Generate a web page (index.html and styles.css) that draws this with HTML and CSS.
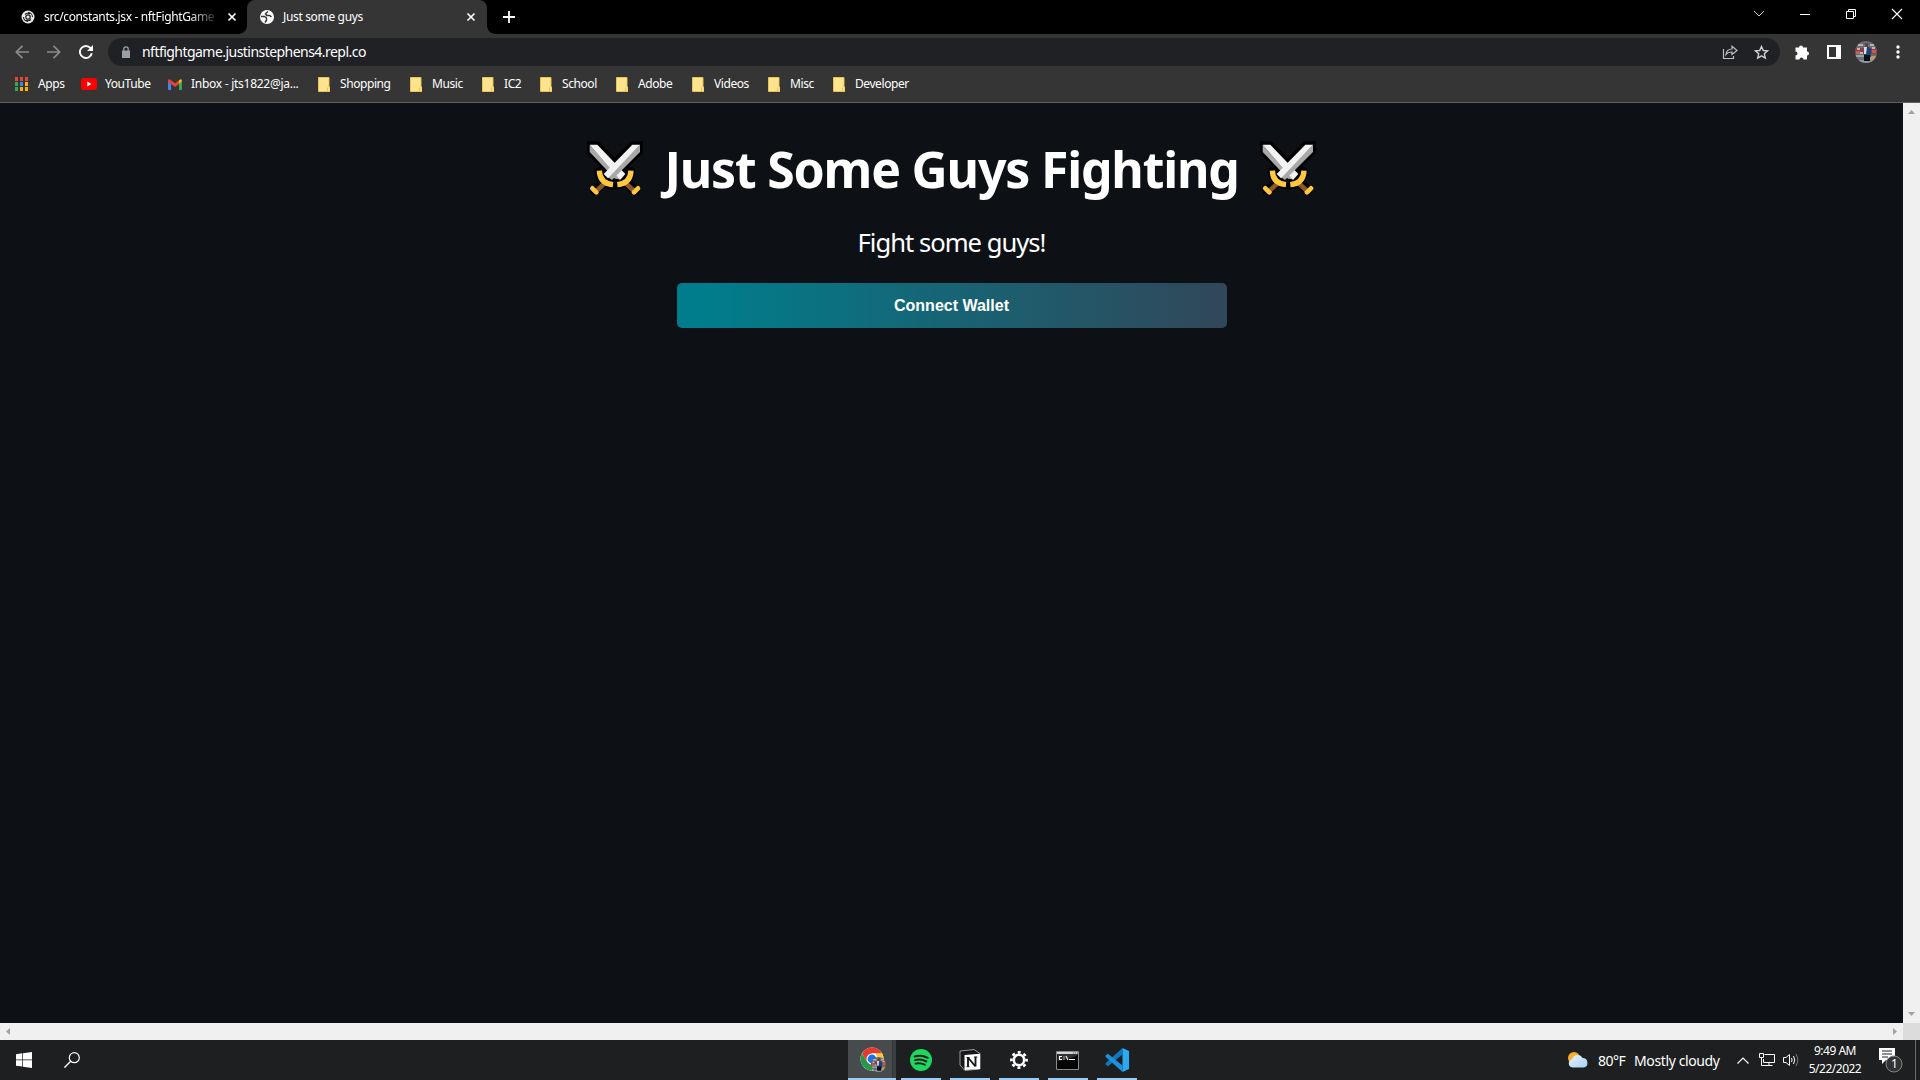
FILE: index.html
```html
<!DOCTYPE html>
<html lang="en">
<head>
<meta charset="utf-8">
<title>Just some guys</title>
<link rel="stylesheet" href="styles.css">
</head>
<body>
<svg class="defs" width="0" height="0">
  <defs>
    <symbol id="folder" viewBox="0 0 12 15">
      <path d="M.5.5h10.5v9.500h1v4.500H.5z" fill="#ffe48f" stroke="#e8c252"/>
      <path d="M9.500 10.500v3.500" stroke="#e8c252"/>
    </symbol>
    <symbol id="close" viewBox="0 0 10 10">
      <path d="M1.500 1.500l7 7M8.500 1.500l-7 7" stroke="#fff" stroke-width="1.700"/>
    </symbol>
    <symbol id="swords" viewBox="20 33 168 168">
      <g stroke="#000" stroke-width="22" stroke-linejoin="miter" fill="#000">
        <path d="M30 45h20l75 75-18 20L30 64zM177 45h-20L72 128l22 18 83-82z"/>
        <path d="M57 124q2 34 40 40M150 124q-2 34-38 40M70 160l-28 22M137 160l28 22" fill="none" stroke-width="28" stroke-linecap="round"/>
      </g>
      <path d="M28 44l90 104-14-2-76-80z" fill="#a9a9a9"/>
      <path d="M28 44h23l84 88-16 18z" fill="#f2f2f2"/>
      <path d="M179 44v22l-84 84-13-9z" fill="#a9a9a9"/>
      <path d="M179 44h-23l-86 88 13 13z" fill="#f2f2f2"/>
      <path d="M76 157l-27 25M133 157l27 25" stroke="#8e562e" stroke-width="14"/>
      <path d="M57 122q1 38 41 42M152 122q-1 38-41 42" fill="none" stroke="#ffc83d" stroke-width="16"/>
      <path d="M36 175l12 12M173 175l-12 12" stroke="#ffc83d" stroke-width="14" stroke-linecap="round"/>
    </symbol>
    <symbol id="avatar" viewBox="0 0 22 22">
      <clipPath id="disc"><circle cx="11" cy="11" r="11"/></clipPath>
      <g clip-path="url(#disc)">
        <path d="M0 0h22v22H0z" fill="#6b6c74"/>
        <path d="M3 3h5v2H3zM15 3h4v2h-4z" fill="#b9aeb4"/>
        <path d="M0 7h22v6H0z" fill="#83424a"/>
        <path d="M2 7h3v2H2zM17 6h3v2h-3zM5 11h3v2H5z" fill="#c3b2b6"/>
        <path d="M1 10h4v3H1zM17 9h4v3h-4z" fill="#c95c50"/>
        <path d="M1 14h8v2H1z" fill="#8fa7a4"/>
        <path d="M15 15h7v4h-7z" fill="#b39b68"/>
        <path d="M0 19h22v3H0z" fill="#8d969e"/>
        <path d="M9 6h5l2 2v8H9z" fill="#174579"/>
        <path d="M9 6h3l-1 7H9z" fill="#d9dce6"/>
        <path d="M10 2h3v4h-3z" fill="#63413b"/>
        <path d="M9 14h6v6H9z" fill="#0b1016"/>
      </g>
    </symbol>
  </defs>
</svg>

<header class="browser">
  <div class="tabstrip">
    <div class="tab tab-back">
      <svg class="favicon" width="14" height="14" viewBox="0 0 14 14"><circle cx="7" cy="7" r="6.500" fill="#e8eaed"/><path d="M7 2.500a4.500 4.500 0 0 1 4.500 4.500M7 11.500A4.500 4.500 0 0 1 2.500 7M4 4.500a4 4 0 0 1 5-.500M10 9.500a4 4 0 0 1-5 .500" fill="none" stroke="#222" stroke-width="1.100"/><circle cx="7" cy="7" r="2.200" fill="none" stroke="#222" stroke-width="1.300"/></svg>
      <span class="tab-title fade">src/constants.jsx - nftFightGame -</span>
      <svg class="x" width="10" height="10"><use href="#close"/></svg>
    </div>
    <div class="tab tab-active">
      <svg class="favicon" width="14" height="14" viewBox="0 0 14 14"><circle cx="7" cy="7" r="7" fill="#fff"/><path d="M8 1.500L5.500 3.800l1.200 1.700h3L11.500 7M1 6.500h3.500L6.500 8v2.200L5 12.500" fill="none" stroke="#35363a" stroke-width="1.500"/></svg>
      <span class="tab-title">Just some guys</span>
      <svg class="x" width="10" height="10"><use href="#close"/></svg>
    </div>
    <svg class="newtab" width="12" height="12" viewBox="0 0 12 12"><path d="M6 0v12M0 6h12" stroke="#fff" stroke-width="1.800"/></svg>
    <div class="caption">
      <svg width="12" height="12" viewBox="0 0 12 12"><path d="M1 3l5 5 5-5" fill="none" stroke="#ccc"/></svg>
      <svg width="12" height="12" viewBox="0 0 12 12"><path d="M1 6.500h10" stroke="#fff"/></svg>
      <svg width="12" height="12" viewBox="0 0 12 12"><path d="M1.500 3.500h7v7h-7zM3.500 3.500v-2h7v7h-2" fill="none" stroke="#fff"/></svg>
      <svg width="12" height="12" viewBox="0 0 12 12"><path d="M1 1l10 10M11 1L1 11" stroke="#fff" stroke-width="1.100"/></svg>
    </div>
  </div>

  <div class="toolbar">
    <svg width="14" height="14" viewBox="0 0 14 14"><path d="M14 7H1.500M7.500.8L1.300 7l6.200 6.200" fill="none" stroke="#8b8b8b" stroke-width="1.700"/></svg>
    <svg width="14" height="14" viewBox="0 0 14 14"><path d="M0 7h12.500M6.500.8L12.700 7l-6.200 6.200" fill="none" stroke="#8b8b8b" stroke-width="1.700"/></svg>
    <svg width="14" height="14" viewBox="0 0 14 14"><path d="M12.800 8.200A6 6 0 1 1 11.600 3.200" fill="none" stroke="#fff" stroke-width="1.900"/><path d="M14 0v6H8z" fill="#fff"/></svg>
    <div class="omnibox">
      <svg width="8" height="12" viewBox="0 0 8 12"><path d="M0 4.500h8V12H0z" fill="#9aa0a6"/><path d="M1.800 5V3a2.200 2.200 0 0 1 4.400 0v2" fill="none" stroke="#9aa0a6" stroke-width="1.300"/></svg>
      <span class="url">nftfightgame.justinstephens4.repl.co</span>
      <svg class="share" width="16" height="15" viewBox="0 0 16 15"><path d="M1.500 4v9.500h10V11" fill="none" stroke="#bdbdbd" stroke-width="1.200"/><path d="M4 9.500c.5-4 3-5.500 6-5.500V1.200l5 4.300-5 4V7C7.500 7 5.500 7.500 4 9.500z" fill="none" stroke="#bdbdbd" stroke-width="1.200"/></svg>
      <svg class="star" width="15" height="15" viewBox="0 0 15 15"><path d="M7.500 1.500l1.800 4 4.300.4-3.300 2.900 1 4.300-3.800-2.300-3.800 2.300 1-4.300L1.400 5.900l4.300-.4z" fill="none" stroke="#d0d0d0" stroke-width="1.400"/></svg>
    </div>
    <div class="actions">
      <svg width="16" height="16" viewBox="0 0 16 16"><path d="M1.500 3.500H5a2 2 0 1 1 4 0h4v4a2 2 0 1 1 0 4v4H9.500a2 2 0 1 0-4 0h-4V11.500a2 2 0 1 0 0-4z" fill="#fff"/></svg>
      <svg width="14" height="14" viewBox="0 0 14 14"><path d="M1 1h12v12H1z" fill="none" stroke="#fff" stroke-width="2"/><path d="M9 0h5v14H9z" fill="#fff"/></svg>
      <svg width="22" height="22"><use href="#avatar"/></svg>
      <svg width="4" height="14" viewBox="0 0 4 14"><circle cx="2" cy="2" r="1.700" fill="#fff"/><circle cx="2" cy="7" r="1.700" fill="#fff"/><circle cx="2" cy="12" r="1.700" fill="#fff"/></svg>
    </div>
  </div>

  <nav class="bookmarks">
    <a class="bm bm-apps"><svg width="13" height="14" viewBox="0 0 13 14"><path d="M0 0h3v4H0zM5 0h3v4H5zM10 0h3v4h-3z" fill="#ea4335"/><path d="M0 5h3v4H0zM0 10h3v4H0z" fill="#34a853"/><path d="M5 5h3v4H5z" fill="#2a8cf4"/><path d="M10 5h3v4h-3zM5 10h3v4H5zM10 10h3v4h-3z" fill="#fbaf08"/></svg><span>Apps</span></a>
    <a class="bm bm-youtube"><svg width="16" height="12" viewBox="0 0 16 12"><rect width="16" height="12" rx="3" fill="#f00"/><path d="M6.300 3.500v5l4.200-2.500z" fill="#fff"/></svg><span>YouTube</span></a>
    <a class="bm bm-inbox"><svg width="14" height="11" viewBox="0 0 14 11"><path d="M0 2v8.200c0 .5.300.8.800.8H3V4z" fill="#4285f4"/><path d="M14 2v8.200c0 .5-.3.800-.8.800H11V4z" fill="#34a853"/><path d="M11 1.500L12 .5q2-1 2 1.500L11 5z" fill="#fbbc04"/><path d="M0 2q0-2.500 2-1.500L7 4.300l4-3v3.700L7 8 3 5 0 3z" fill="#ea4335"/></svg><span>Inbox - jts1822@ja...</span></a>
    <a class="bm bm-shopping"><svg width="12" height="15"><use href="#folder"/></svg><span>Shopping</span></a>
    <a class="bm bm-music"><svg width="12" height="15"><use href="#folder"/></svg><span>Music</span></a>
    <a class="bm bm-ic"><svg width="12" height="15"><use href="#folder"/></svg><span>IC2</span></a>
    <a class="bm bm-school"><svg width="12" height="15"><use href="#folder"/></svg><span>School</span></a>
    <a class="bm bm-adobe"><svg width="12" height="15"><use href="#folder"/></svg><span>Adobe</span></a>
    <a class="bm bm-videos"><svg width="12" height="15"><use href="#folder"/></svg><span>Videos</span></a>
    <a class="bm bm-misc"><svg width="12" height="15"><use href="#folder"/></svg><span>Misc</span></a>
    <a class="bm bm-dev"><svg width="12" height="15"><use href="#folder"/></svg><span>Developer</span></a>
  </nav>
</header>

<div class="viewport">
  <main class="page">
    <h1 class="title">
      <svg width="56" height="56"><use href="#swords"/></svg>
      <span class="title-text">Just Some Guys Fighting</span>
      <svg width="56" height="56"><use href="#swords"/></svg>
    </h1>
    <p class="subtitle">Fight some guys!</p>
    <button class="connect">Connect Wallet</button>
  </main>
  <div class="vscroll">
    <svg width="7" height="4" viewBox="0 0 7 4"><path d="M3.500 0L7 4H0z" fill="#a3a3a3"/></svg>
    <svg width="7" height="4" viewBox="0 0 7 4"><path d="M3.500 4L7 0H0z" fill="#a3a3a3"/></svg>
  </div>
  <div class="hscroll">
    <svg width="4" height="7" viewBox="0 0 4 7"><path d="M0 3.500L4 0v7z" fill="#a3a3a3"/></svg>
    <svg width="4" height="7" viewBox="0 0 4 7"><path d="M4 3.500L0 0v7z" fill="#a3a3a3"/></svg>
  </div>
  <div class="corner"></div>
</div>

<footer class="taskbar">
  <div class="start">
    <svg width="16" height="16" viewBox="0 0 16 16"><path d="M0 2.200l6.300-.9v6.200H0zM7 1.200L16 0v7.500H7zM0 8.300h6.300v6.300L0 13.800zM7 8.300h9V16l-9-1.200z" fill="#fff"/></svg>
    <svg width="16" height="16" viewBox="0 0 16 16"><circle cx="10.300" cy="5.700" r="5" fill="none" stroke="#fff" stroke-width="1.200"/><path d="M6.700 9.200L.4 15.600" stroke="#fff" stroke-width="1.400"/></svg>
  </div>
  <div class="apps">
    <div class="app app-chrome">
      <svg width="26" height="26" viewBox="0 0 26 26"><circle cx="12" cy="12" r="11.500" fill="#fff"/><path d="M22 6.300A11.500 11.500 0 0 1 12 23.500l5-8.500-1-8.700z" fill="#fcc934"/><path d="M2 6.300A11.500 11.500 0 0 0 12 23.500l4.500-8-9.500-1z" fill="#279847"/><path d="M2 6.300A11.500 11.500 0 0 1 22 6.300H12L7 14.500z" fill="#e33b2e"/><circle cx="12" cy="12" r="5.500" fill="#fff"/><circle cx="12" cy="12" r="4.400" fill="#1a73e8"/><svg x="11" y="10" width="15" height="15"><use href="#avatar"/></svg></svg>
    </div>
    <div class="app">
      <svg width="22" height="22" viewBox="0 0 22 22"><circle cx="11" cy="11" r="11" fill="#1ed760"/><path d="M4.500 7.500q7-2 13.200 1.300M5 11.200q6-1.700 11.300 1.200M5.500 14.600q5-1.200 9.300 1.100" fill="none" stroke="#18241b" stroke-width="1.900" stroke-linecap="round"/></svg>
    </div>
    <div class="app">
      <svg width="22" height="22" viewBox="0 0 22 22"><path d="M1 2l14-1.500 6 4V20l-15 1.500L1 16z" fill="#17181a" stroke="#9a9a9a"/><path d="M5.500 6L21 4.700v15.200L5.500 21z" fill="#fff"/><path d="M9 9v8.500M9 8.500l7.500 9M16.500 8v9.500" stroke="#181818" stroke-width="1.900" fill="none"/><path d="M7.500 8.500h3M15 8h3.300M7.500 17.700h3" stroke="#181818"/></svg>
    </div>
    <div class="app">
      <svg width="18" height="18" viewBox="0 0 18 18"><circle cx="9" cy="9" r="7.600" fill="none" stroke="#fff" stroke-width="2.600" stroke-dasharray="2.980 2.988" stroke-dashoffset="1.490"/><circle cx="9" cy="9" r="5.200" fill="none" stroke="#fff" stroke-width="2.600"/></svg>
    </div>
    <div class="app app-cmd">
      <svg width="23" height="19" viewBox="0 0 23 19"><path d="M.5.5h22v18H.5z" fill="#050505" stroke="#8a8a8a"/><path d="M1 1h21v2H1z" fill="#d0d4da"/><path d="M17 2h1M19 2h1M21 2h1" stroke="#456"/><path d="M1.500 10Q12 9 22 4v-1H1.500z" fill="#303030"/><path d="M6 5.500H3.500v3H6M8 5.500v1M8 7.500v1M10 5l2 4M13 8.500h6" fill="none" stroke="#fff" stroke-width="1.100"/></svg>
    </div>
    <div class="app">
      <svg width="24" height="24" viewBox="0 0 24 24"><path d="M17.500 0v6.500L3 18.200.5 16.500v-1.200z" fill="#1277bd"/><path d="M17.500 24v-6.500L3 5.800.5 7.500v1.200z" fill="#1e8fdc"/><path d="M17.500 0L24 3v18l-6.500 3z" fill="#2aa9f5"/></svg>
    </div>
  </div>
  <div class="tray">
    <svg class="weather" width="21" height="16" viewBox="0 0 21 16"><defs><linearGradient id="cloud" x2="1" y2="1"><stop stop-color="#e9f5ff"/><stop offset="1" stop-color="#a5d0f5"/></linearGradient></defs><circle cx="6" cy="6" r="6" fill="#f9ae2c"/><path d="M4.500 15.500a4.200 4.200 0 0 1-.3-8.300 5.500 5.500 0 0 1 10.300-1.100 4.800 4.800 0 0 1 1.500 9.400z" fill="url(#cloud)"/></svg>
    <span class="temp">80°F</span>
    <span class="cond">Mostly cloudy</span>
    <svg class="chev" width="12" height="7" viewBox="0 0 12 7"><path d="M.5 6.500L6 1l5.500 5.500" fill="none" stroke="#fff" stroke-width="1.200"/></svg>
    <svg class="net" width="16" height="14" viewBox="0 0 16 14"><path d="M5.500 1.500h10v8H4.500V6M10 9.500v3M7 12.500h6.500M.5.500h4v4h-4zM2.500 4.500v8H7" fill="none" stroke="#fff"/></svg>
    <svg class="vol" width="16" height="14" viewBox="0 0 16 14"><path d="M.5 4.500h2.500l3.500-3v11L3 9.500H.5z" fill="none" stroke="#fff"/><path d="M8.500 5q1.200 2 0 4M10.500 3q2.500 4 0 8" fill="none" stroke="#fff"/><path d="M12.800 1q4 6 0 12" fill="none" stroke="#777"/></svg>
    <div class="clock"><span class="time">9:49 AM</span><span class="date">5/22/2022</span></div>
    <div class="notify">
      <svg width="24" height="26" viewBox="0 0 24 26"><path d="M0 1h16v12H7l-4 4v-4H0z" fill="#fff"/><path d="M3 4h10M3 7h10M3 10h6" stroke="#202223"/><circle cx="15" cy="17" r="8" fill="#303234" stroke="#858585"/></svg>
      <span class="badge">1</span>
    </div>
    <div class="peek"></div>
  </div>
</footer>
</body>
</html>
```
FILE: styles.css
```css
* { box-sizing: border-box; }
body {
  margin: 0;
  width: 1920px;
  height: 1080px;
  overflow: hidden;
  display: flex;
  flex-direction: column;
  background: #0d1116;
  color: #fff;
  font-family: "Noto Sans", "Open Sans", sans-serif;
  font-size: 12px;
}
svg { display: block; flex: none; }
.defs { position: absolute; }

.browser { height: 103px; background: #353535; border-bottom: 1px solid #5f5f5f; }
.tabstrip { height: 34px; background: #000; display: flex; align-items: center; }
.tab { height: 34px; display: flex; align-items: center; white-space: nowrap; }
.tab-back { width: 247px; padding-left: 21px; }
.tab-active {
  width: 240px;
  padding-left: 13px;
  background: #353535;
  border-radius: 8px 8px 0 0;
  position: relative;
}
.tab-active::before, .tab-active::after {
  content: "";
  position: absolute;
  bottom: 0;
  width: 8px;
  height: 8px;
}
.tab-active::before { left: -8px; background: radial-gradient(circle at 0 0, transparent 7.5px, #353535 8px); }
.tab-active::after { right: -8px; background: radial-gradient(circle at 100% 0, transparent 7.5px, #353535 8px); }
.tab-title { width: 171px; margin-left: 9px; padding-bottom: 1px; letter-spacing: -0.36px; }
.tab-active .tab-title { width: 174px; letter-spacing: -0.34px; }
.tab-active .x { margin-left: 9px; }
.tab-back .x { margin-left: 12px; }
.fade { -webkit-mask-image: linear-gradient(90deg, #000 145px, transparent 176px); mask-image: linear-gradient(90deg, #000 145px, transparent 176px); }
.newtab { margin-left: 16px; }
.caption { margin-left: auto; display: flex; gap: 34px; padding: 0 17px 6px 0; }

.toolbar { height: 36px; display: flex; align-items: center; padding-left: 15px; gap: 18px; }
.omnibox {
  width: 1672px;
  height: 28px;
  margin-left: -3px;
  border-radius: 14px;
  background: #202124;
  display: flex;
  align-items: center;
  padding-left: 14px;
}
.url { margin-left: 12px; padding-bottom: 1px; font-size: 14px; letter-spacing: -0.54px; }
.share { margin-left: auto; }
.star { margin: 0 11px 0 16px; }
.actions { display: flex; align-items: center; margin-left: -4px; }
.actions svg { margin-right: 17px; }
.actions svg:nth-child(2) { margin-right: 14px; }
.actions svg:nth-child(3) { margin-right: 19px; }

.bookmarks { height: 28px; display: flex; align-items: center; padding-left: 15px; letter-spacing: -0.42px; }
.bm { display: flex; align-items: center; gap: 10px; white-space: nowrap; }
.bm span { padding-bottom: 1px; }
.bm-apps { width: 66px; }
.bm-youtube { width: 87px; gap: 8px; }
.bm-inbox { width: 150px; gap: 9px; letter-spacing: -0.27px; }
.bm-shopping { width: 92px; }
.bm-music { width: 72px; }
.bm-ic { width: 58px; }
.bm-school, .bm-adobe, .bm-videos { width: 76px; }
.bm-misc { width: 65px; }

.viewport { flex: 1; display: grid; grid-template-columns: 1903px 17px; grid-template-rows: 920px 17px; }
.page { display: flex; flex-direction: column; align-items: center; padding-top: 32px; }
.title { margin: 0; height: 68px; display: flex; align-items: center; gap: 17px; }
.title-text { width: 583px; text-align: center; white-space: nowrap; font-size: 50px; line-height: 68px; font-weight: 700; letter-spacing: -1.2px; }
.subtitle { margin: 22px 0 0; height: 36px; line-height: 36px; font-size: 25.6px; letter-spacing: -1px; }
.connect {
  margin-top: 22px;
  width: 550px;
  height: 45px;
  border: 0;
  border-radius: 5px;
  color: #fff;
  font: bold 16px "Liberation Sans", Arial, sans-serif;
  background: linear-gradient(90deg, #007d8c 5%, #30485a 98%);
}
.vscroll { background: #f0f0f0; display: flex; flex-direction: column; justify-content: space-between; align-items: center; padding: 7px 0; }
.hscroll { background: #f0f0f0; display: flex; justify-content: space-between; align-items: center; padding: 0 6px; }
.corner { background: #dcdcdc; }

.taskbar { height: 40px; background: #1d1f20; display: flex; }
.start { width: 848px; display: flex; align-items: center; gap: 32px; padding-left: 16px; }
.apps { display: flex; gap: 9px; }
.app { width: 40px; height: 40px; display: flex; align-items: center; justify-content: center; border-bottom: 2px solid #99cdf9; padding-top: 2px; }
.app-chrome { width: 48px; margin-right: -4px; padding-left: 2px; background: linear-gradient(90deg, #484b4d 44px, #292b2d 44px, #3c3f41 45px); }
.app-cmd { padding-right: 2px; }
.tray { margin-left: auto; display: flex; align-items: center; font-size: 14px; white-space: nowrap; }
.temp { width: 36px; margin-left: 9px; letter-spacing: -0.5px; }
.cond { width: 103px; letter-spacing: -0.38px; }
.net { margin-left: 10px; }
.vol { margin-left: 8px; }
.clock { width: 72px; display: flex; flex-direction: column; align-items: center; font-size: 12px; line-height: 18px; letter-spacing: -0.5px; }
.notify { width: 24px; margin-left: 8px; margin-right: 12px; position: relative; }
.badge { position: absolute; left: 12px; top: 8px; font-size: 12px; line-height: 18px; }
.peek { width: 5px; height: 40px; border-left: 1px solid #6a6a6a; }
```
